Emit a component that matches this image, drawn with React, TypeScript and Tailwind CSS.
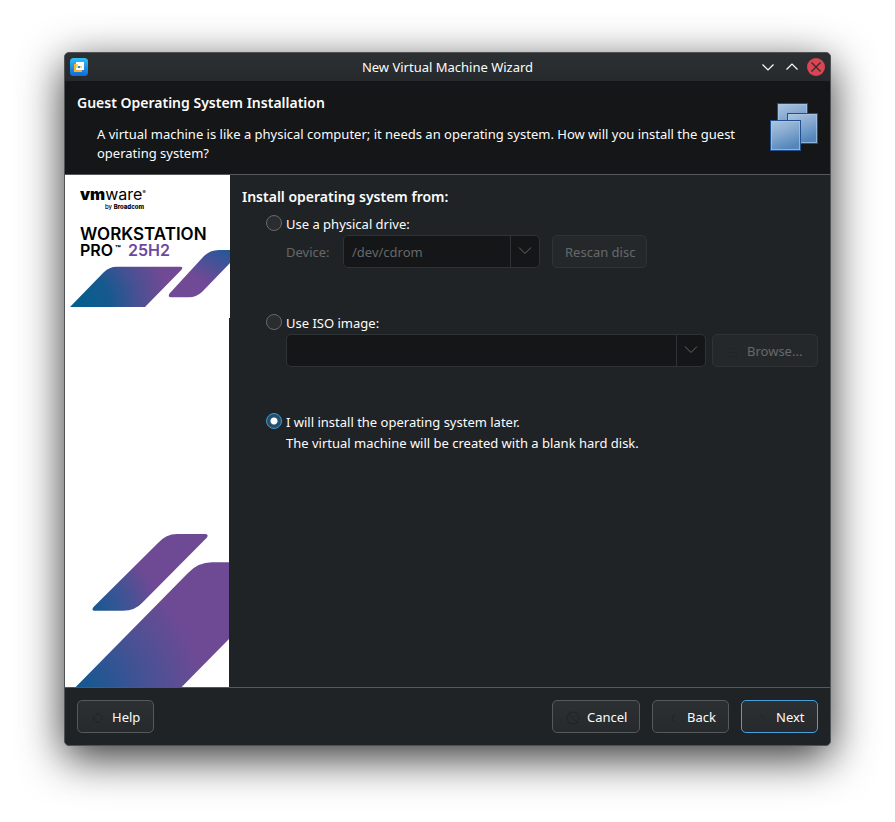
import { ReactNode, useState } from 'react';

type InstallSource = 'drive' | 'iso' | 'later';

interface WizardButtonProps {
  children: ReactNode;
  icon?: ReactNode;
  primary?: boolean;
  disabled?: boolean;
  className?: string;
}

function WizardButton({ children, icon, primary, disabled, className = 'min-w-[77px]' }: WizardButtonProps) {
  const look = disabled
    ? 'border-[#303336] bg-[#25282b] text-[#65686a]'
    : primary
      ? 'border-[#4a9fd8] bg-linear-to-b from-[#2d3033] to-[#272a2d]'
      : 'border-[#56595b] bg-linear-to-b from-[#2d3033] to-[#272a2d]';

  return (
    <button
      type="button"
      disabled={disabled}
      className={`flex h-[33px] shrink-0 items-center gap-1.5 rounded-[5px] border pt-0.5 pr-[11px] pl-3 ${look} ${className}`}
    >
      {icon && (
        <svg viewBox="0 0 16 16" className="size-4" fill="none" stroke="#202326" aria-hidden="true">
          {icon}
        </svg>
      )}
      {children}
    </button>
  );
}

interface ComboBoxProps {
  id: string;
  label?: string;
  options: string[];
  className: string;
}

function ComboBox({ id, label, options, className }: ComboBoxProps) {
  return (
    <div className={`relative h-[33px] ${className}`}>
      <select
        id={id}
        aria-label={label}
        disabled
        className="h-full w-full appearance-none rounded-[5px] border border-[#303336] bg-[#141618] pt-0.5 pl-2 text-[#65686a] opacity-100"
      >
        {options.map(option => (
          <option key={option}>{option}</option>
        ))}
      </select>
      <span className="pointer-events-none absolute inset-y-px right-px flex w-[29px] items-center justify-center border-l border-[#303336] pb-0.5">
        <svg viewBox="0 0 14 14" className="size-3.5" fill="none" stroke="#65686a" aria-hidden="true">
          <path d="M1 3.5 7 9.5 13 3.5" />
        </svg>
      </span>
    </div>
  );
}

interface SourceRadioProps {
  value: InstallSource;
  selected: InstallSource;
  onSelect: (value: InstallSource) => void;
  children: ReactNode;
}

function SourceRadio({ value, selected, onSelect, children }: SourceRadioProps) {
  return (
    <label className="flex h-[21px] items-center gap-1">
      <input
        type="radio"
        name="source"
        value={value}
        checked={selected === value}
        onChange={() => onSelect(value)}
        className="mb-1 size-4 appearance-none rounded-full border border-[#67696b] bg-[#2a2d30] checked:border-[#3d9ad4] checked:bg-[radial-gradient(circle,#ffffff_3px,#24506c_4px)]"
      />
      {children}
    </label>
  );
}

function AppIcon() {
  return (
    <svg viewBox="0 0 18 18" className="size-[18px]" aria-hidden="true">
      <defs>
        <linearGradient id="appBlue" x1="0" y1="0" x2="0" y2="1">
          <stop offset="0" stopColor="#2fc0f8" />
          <stop offset="1" stopColor="#1269d6" />
        </linearGradient>
      </defs>
      <rect width="18" height="18" rx="3.5" fill="url(#appBlue)" />
      <path d="M4 6h2v6h6v2H4z" fill="#f9b036" />
      <path d="M6 4h8v8H6z" fill="#fff" />
      <path d="M6 6h6v4H6z" fill="#fbd768" />
      <path d="M8 6h4v2H8z" fill="#fff" />
      <rect x="8" y="8" width="2" height="2" fill="#1d8ce0" />
    </svg>
  );
}

function MachinesIcon() {
  const screens = [
    [7.5, 0.5],
    [17.5, 10.5],
    [0.5, 17.5],
  ];

  return (
    <svg viewBox="0 0 48 48" className="size-12 shrink-0" aria-hidden="true">
      <defs>
        <linearGradient id="screen" x1="0" y1="0" x2="0.4" y2="1">
          <stop offset="0" stopColor="#b0c6df" />
          <stop offset="0.5" stopColor="#86a9d0" />
          <stop offset="1" stopColor="#5486bb" />
        </linearGradient>
      </defs>
      {screens.map(([x, y]) => (
        <g key={x}>
          <rect x={x} y={y} width="30" height="30" fill="url(#screen)" stroke="#23508c" />
          <rect x={x + 1} y={y + 1} width="28" height="28" fill="none" stroke="#a8c6e6" strokeOpacity="0.7" />
        </g>
      ))}
    </svg>
  );
}

function Banner() {
  return (
    <svg viewBox="0 0 165 143" className="block h-[143px] w-[165px] bg-white" fontFamily="Inter, sans-serif">
      <defs>
        <radialGradient id="stripeLeft" gradientUnits="userSpaceOnUse" cx="12" cy="130" r="95">
          <stop offset="0" stopColor="#045f8d" />
          <stop offset="0.35" stopColor="#16598f" />
          <stop offset="0.65" stopColor="#4a5093" />
          <stop offset="0.95" stopColor="#704a94" />
        </radialGradient>
        <linearGradient id="stripeRight" x1="0.3" y1="1" x2="1" y2="0">
          <stop offset="0.35" stopColor="#704a94" />
          <stop offset="1" stopColor="#23589a" />
        </linearGradient>
      </defs>
      <text x="15" y="25" fontSize="16" fontWeight="900">
        vm<tspan fontWeight="400">ware</tspan>
        <tspan fontSize="5" dy="-6">®</tspan>
      </text>
      <text x="40" y="34" fontSize="6" fontWeight="500">
        by <tspan fontWeight="800">Broadcom</tspan>
      </text>
      <text fontSize="17" fontWeight="600">
        <tspan x="15" y="65">WORKSTATION</tspan>
        <tspan x="15" y="81" fontSize="16">PRO</tspan>
        <tspan x="50" y="77" fontSize="9" fontWeight="800">™</tspan>
        <tspan x="63" y="81" fontSize="16" fill="#6b489d">25H2</tspan>
      </text>
      <path
        d="M5 132 38.5 97.5Q44 91.7 52 91.7H115.5Q118.5 91.7 116.5 94.7L80 132Z"
        fill="url(#stripeLeft)"
      />
      <path
        d="M165 75H154Q145 75 139 81L104.5 118.5Q102.5 122.3 106 122.3H124Q131 122.3 137 117L165 88Z"
        fill="url(#stripeRight)"
      />
    </svg>
  );
}

function BottomArt() {
  return (
    <svg viewBox="0 0 164 160" className="block h-40 w-41" aria-hidden="true">
      <defs>
        <radialGradient id="stripeSmall" gradientUnits="userSpaceOnUse" cx="28" cy="84" r="68">
          <stop offset="0" stopColor="#15598f" />
          <stop offset="0.4" stopColor="#365594" />
          <stop offset="0.95" stopColor="#6e4a94" />
        </radialGradient>
        <radialGradient id="stripeBig" gradientUnits="userSpaceOnUse" cx="12" cy="164" r="125">
          <stop offset="0" stopColor="#10598f" />
          <stop offset="0.3" stopColor="#2d5593" />
          <stop offset="0.6" stopColor="#4b5194" />
          <stop offset="1" stopColor="#6e4a94" />
        </radialGradient>
      </defs>
      <path
        d="M29.5 83.7Q26 83.7 28.5 80L93 16Q101 7 112 7H140Q144 7 142 10.5L77 76Q70 83.7 58 83.7Z"
        fill="url(#stripeSmall)"
      />
      <path d="M10.7 160 123 46Q133 35.3 147 35.3H164V112L116.7 160Z" fill="url(#stripeBig)" />
    </svg>
  );
}

export default function App() {
  const [source, setSource] = useState<InstallSource>('later');

  return (
    <div className="bg-white px-16 pt-[52px] pb-[76px] font-['Noto_Sans',sans-serif] text-[13px] leading-[19px] text-[#fcfcfc]">
      <div className="overflow-hidden rounded-[5px] border border-[#505355] bg-[#202326] shadow-[0_12px_44px_rgba(0,0,0,0.8)]">
        <div className="grid h-7 grid-cols-[1fr_auto_1fr] items-center bg-linear-to-b from-[#2c3033] to-[#272a2d] px-[5px]">
          <AppIcon />
          <h1>New Virtual Machine Wizard</h1>
          <div className="flex justify-end gap-1.5">
            <button type="button" aria-label="Minimize">
              <svg viewBox="0 0 18 18" className="size-[18px]" fill="none" stroke="#fcfcfc" strokeWidth="1.2">
                <path d="M3.5 6.5 9 12 14.5 6.5" />
              </svg>
            </button>
            <button type="button" aria-label="Maximize">
              <svg viewBox="0 0 18 18" className="size-[18px]" fill="none" stroke="#fcfcfc" strokeWidth="1.2">
                <path d="M3.5 11.5 9 6 14.5 11.5" />
              </svg>
            </button>
            <button type="button" aria-label="Close">
              <svg viewBox="0 0 18 18" className="size-[18px]" fill="none" stroke="#2a2d30" strokeWidth="1.2">
                <circle cx="9" cy="9" r="9" fill="#da4453" stroke="none" />
                <path d="M4.5 4.5 13.5 13.5M13.5 4.5 4.5 13.5" />
              </svg>
            </button>
          </div>
        </div>

        <header className="flex gap-5 border-b border-[#56595b] bg-[#141618] px-3 pt-3 pb-[11px]">
          <div className="flex-1">
            <h2 className="text-sm leading-[19px] font-semibold">Guest Operating System Installation</h2>
            <p className="mt-[13px] pl-5">
              A virtual machine is like a physical computer; it needs an operating system. How will you install the
              guest operating system?
            </p>
          </div>
          <div className="pt-2.5">
            <MachinesIcon />
          </div>
        </header>

        <main className="flex min-h-[512px]">
          <aside className="flex w-[165px] shrink-0 flex-col">
            <Banner />
            <div className="flex w-41 flex-1 flex-col justify-end bg-white">
              <BottomArt />
            </div>
          </aside>

          <form className="flex-1 p-3">
            <fieldset>
              <legend className="text-sm leading-[19px] font-semibold">Install operating system from:</legend>
              <div className="mt-2 flex flex-col gap-[45px] pl-6">
                <div>
                  <SourceRadio value="drive" selected={source} onSelect={setSource}>
                    Use a physical drive:
                  </SourceRadio>
                  <div className="flex items-center gap-3 pl-5">
                    <label htmlFor="device" className="w-[45px] pt-0.5 text-[#65686a]">
                      Device:
                    </label>
                    <ComboBox id="device" options={['/dev/cdrom']} className="w-[197px]" />
                    <WizardButton disabled>Rescan disc</WizardButton>
                  </div>
                </div>

                <div>
                  <SourceRadio value="iso" selected={source} onSelect={setSource}>
                    Use ISO image:
                  </SourceRadio>
                  <div className="flex items-center gap-1.5 pl-5">
                    <ComboBox id="iso" label="ISO image" options={['']} className="flex-1" />
                    <WizardButton disabled className="w-[106px]" icon={<path d="M3 4.5H9M3 8.5H13M3 12.5H12" />}>
                      Browse...
                    </WizardButton>
                  </div>
                </div>

                <div>
                  <SourceRadio value="later" selected={source} onSelect={setSource}>
                    I will install the operating system later.
                  </SourceRadio>
                  <p className="pt-px pl-5">The virtual machine will be created with a blank hard disk.</p>
                </div>
              </div>
            </fieldset>
          </form>
        </main>

        <footer className="flex gap-3 border-t border-[#56595b] p-3">
          <WizardButton icon={<path d="M8 3 13 8 8 13 3 8Z" />}>Help</WizardButton>
          <div className="flex-1" />
          <WizardButton
            className="min-w-[88px]"
            icon={<path d="M3.5 3.5 12.5 12.5M8 2A6 6 0 1 1 8 14 6 6 0 1 1 8 2Z" />}
          >
            Cancel
          </WizardButton>
          <WizardButton icon={<path d="M10 4 7 8 10 12" />}>Back</WizardButton>
          <WizardButton primary icon={<path d="M6 4 9 8" />}>
            Next
          </WizardButton>
        </footer>
      </div>
    </div>
  );
}
